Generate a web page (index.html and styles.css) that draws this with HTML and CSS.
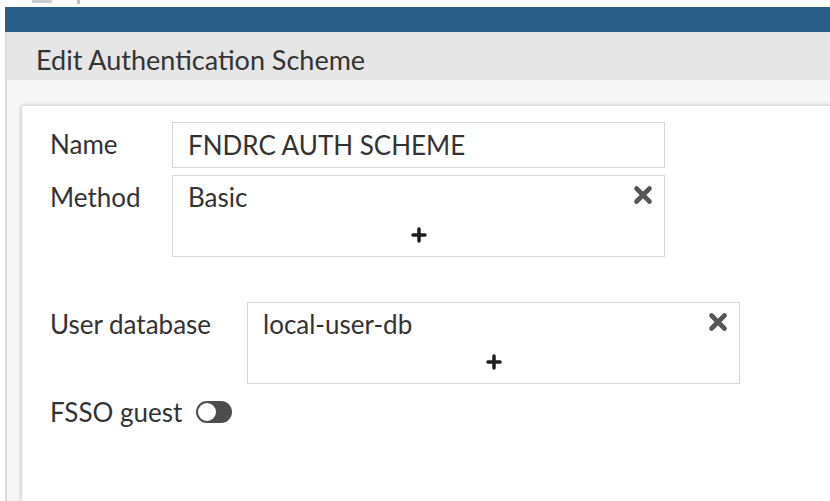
FILE: index.html
```html
<!DOCTYPE html>
<html lang="en">
<head>
<meta charset="utf-8">
<title>Edit Authentication Scheme</title>
<link rel="stylesheet" href="styles.css">
</head>
<body>
  <div class="topstrip">
    <span class="tab-hint"></span>
    <span class="caret-hint"></span>
  </div>
  <div class="frame">
    <div class="navbar"></div>
    <div class="dialog-head">
      <h1 class="dialog-title">Edit Authentication Scheme</h1>
    </div>
    <div class="dialog-body">
      <div class="panel">
        <div class="form-grid grid-basic">
          <label class="field-label">Name</label>
          <div class="text-input">FNDRC AUTH SCHEME</div>

          <label class="field-label">Method</label>
          <div class="multi-select">
            <div class="chip-row">
              <span class="chip-text">Basic</span>
              <svg class="remove-icon" viewBox="0 0 20 20" aria-hidden="true">
                <path d="M3.5 3.5 L16.5 16.5 M16.5 3.5 L3.5 16.5" />
              </svg>
            </div>
            <div class="add-row">
              <svg class="add-icon" viewBox="0 0 16 16" aria-hidden="true">
                <path d="M8 2 V14 M2 8 H14" />
              </svg>
            </div>
          </div>
        </div>

        <div class="form-grid grid-db">
          <label class="field-label">User database</label>
          <div class="multi-select">
            <div class="chip-row">
              <span class="chip-text">local-user-db</span>
              <svg class="remove-icon" viewBox="0 0 20 20" aria-hidden="true">
                <path d="M3.5 3.5 L16.5 16.5 M16.5 3.5 L3.5 16.5" />
              </svg>
            </div>
            <div class="add-row">
              <svg class="add-icon" viewBox="0 0 16 16" aria-hidden="true">
                <path d="M8 2 V14 M2 8 H14" />
              </svg>
            </div>
          </div>
        </div>

        <div class="toggle-row">
          <span class="field-label inline">FSSO guest</span>
          <span class="toggle"><span class="knob"></span></span>
        </div>
      </div>
    </div>
  </div>
</body>
</html>
```

FILE: styles.css
```css
* {
  box-sizing: border-box;
}

html,
body {
  margin: 0;
  height: 100%;
  overflow: hidden;
  background: #ffffff;
  font-family: Lato, "Open Sans", "Liberation Sans", sans-serif;
  color: #333333;
}

.topstrip {
  height: 7px;
  position: relative;
  background: #ffffff;
}

/* remnants of the toolbar icons above the cropped edge */
.tab-hint {
  position: absolute;
  left: 32px;
  top: 0;
  width: 20px;
  height: 3px;
  background: #c9ced4;
}

.caret-hint {
  position: absolute;
  left: 77px;
  top: 0;
  width: 3px;
  height: 4px;
  background: #b9c2cc;
}

.frame {
  margin-left: 5px;
  height: calc(100% - 7px);
  display: flex;
  flex-direction: column;
}

.navbar {
  height: 25px;
  flex: none;
  background: #2b5e87;
}

.dialog-head {
  height: 48px;
  flex: none;
  background: #e6e6e6;
  border-left: 2px solid #d8d8d8;
  padding: 13px 0 0 29px;
}

.dialog-title {
  margin: 0;
  font-size: 27px;
  line-height: 30px;
  font-weight: 400;
  color: #333333;
}

.dialog-body {
  flex: 1;
  background: #f7f7f7;
  border-left: 2px solid #d8d8d8;
  padding: 26px 0 0 15px;
  display: flex;
  flex-direction: column;
}

.panel {
  flex: 1;
  margin-right: -20px;
  background: #ffffff;
  box-shadow: -2px 0 4px rgba(0, 0, 0, 0.12), 0 -2px 4px rgba(0, 0, 0, 0.08);
  padding: 16px 0 0 28px;
}

.form-grid {
  display: grid;
  row-gap: 7px;
  font-size: 26px;
}

.grid-basic {
  grid-template-columns: 122px 493px;
}

.grid-db {
  grid-template-columns: 197px 493px;
  margin-top: 45px;
}

.field-label {
  line-height: 30px;
  padding-top: 7px;
  color: #333333;
}

.text-input,
.multi-select {
  border: 1px solid #d6d6d6;
  background: #ffffff;
}

.text-input {
  height: 46px;
  padding: 0 15px;
  line-height: 44px;
}

.multi-select {
  height: 82px;
  display: flex;
  flex-direction: column;
}

.chip-row {
  display: flex;
  justify-content: space-between;
  align-items: flex-start;
  line-height: 30px;
  padding: 6px 11px 0 15px;
}

.remove-icon {
  width: 20px;
  height: 20px;
  margin-top: 3px;
  stroke: #555555;
  stroke-width: 4.6;
  stroke-linecap: round;
  fill: none;
}

.add-row {
  margin-top: auto;
  display: flex;
  justify-content: center;
  padding-bottom: 13px;
}

.add-icon {
  width: 16px;
  height: 16px;
  stroke: #1e1e1e;
  stroke-width: 3.5;
  stroke-linecap: round;
  fill: none;
}

.toggle-row {
  display: flex;
  align-items: center;
  gap: 14px;
  margin-top: 13px;
  font-size: 26px;
}

.field-label.inline {
  padding-top: 0;
}

.toggle {
  width: 36px;
  height: 22px;
  border-radius: 11px;
  background: #4d4d4d;
  display: flex;
  align-items: center;
  padding-left: 2px;
}

.knob {
  width: 18px;
  height: 18px;
  border-radius: 50%;
  background: #ffffff;
}
```
